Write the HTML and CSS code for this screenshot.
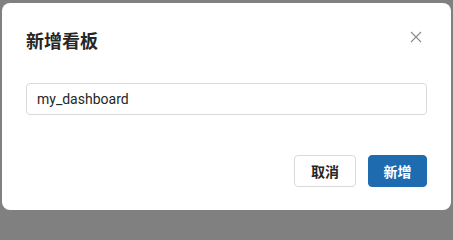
FILE: index.html
```html
<!DOCTYPE html>
<html lang="zh">
<head>
<meta charset="utf-8">
<link rel="stylesheet" href="styles.css">
</head>
<body>
<div class="dialog">
  <div class="header">
    <div class="title">新增看板</div>
    <button class="close" aria-label="close">
      <svg width="12" height="12" viewBox="0 0 12 12"><path d="M1 1 L11 11 M11 1 L1 11" stroke="#8c8c8c" stroke-width="1.2" fill="none"/></svg>
    </button>
  </div>
  <div class="body">
    <input class="input" type="text" value="my_dashboard">
  </div>
  <div class="footer">
    <button class="btn btn-default">取消</button>
    <button class="btn btn-primary">新增</button>
  </div>
</div>
</body>
</html>
```
FILE: styles.css
```css
html {
  background: #808080;
}
body {
  margin: 0;
  padding: 3px 2px 2px 2px;
  font-family: "Noto Sans", "Noto Sans CJK SC", sans-serif;
}
.dialog {
  background: #fff;
  border-radius: 8px;
  height: 207px;
  box-sizing: border-box;
  padding: 25px 24px 0 24px;
  display: flex;
  flex-direction: column;
}
.header {
  display: flex;
  justify-content: space-between;
  align-items: flex-start;
}
.title {
  font-family: "Noto Sans CJK SC", sans-serif;
  font-weight: 700;
  font-size: 18px;
  line-height: 24px;
  color: #262626;
}
.close {
  border: 0;
  background: none;
  padding: 0;
  margin: 3px 5px 0 0;
  width: 12px;
  height: 12px;
  display: flex;
}
.body {
  margin-top: 31px;
}
.input {
  display: block;
  width: 100%;
  height: 32px;
  box-sizing: border-box;
  border: 1px solid #d9d9d9;
  border-radius: 4px;
  padding: 0 10px;
  font-family: Roboto, "Noto Sans", "Noto Sans CJK SC", sans-serif;
  font-size: 14px;
  color: #262626;
  outline: none;
}
.footer {
  margin-top: 40px;
  display: flex;
  justify-content: flex-end;
  gap: 12px;
}
.btn {
  height: 32px;
  box-sizing: border-box;
  border-radius: 4px;
  font-family: "Noto Sans CJK SC", sans-serif;
  font-weight: 700;
  font-size: 14px;
  padding: 0;
  cursor: pointer;
}
.btn-default {
  width: 62px;
  background: #fff;
  border: 1px solid #d9d9d9;
  color: #262626;
}
.btn-primary {
  width: 59px;
  background: #1e6bb0;
  border: 1px solid #1e6bb0;
  color: #fff;
}
```
